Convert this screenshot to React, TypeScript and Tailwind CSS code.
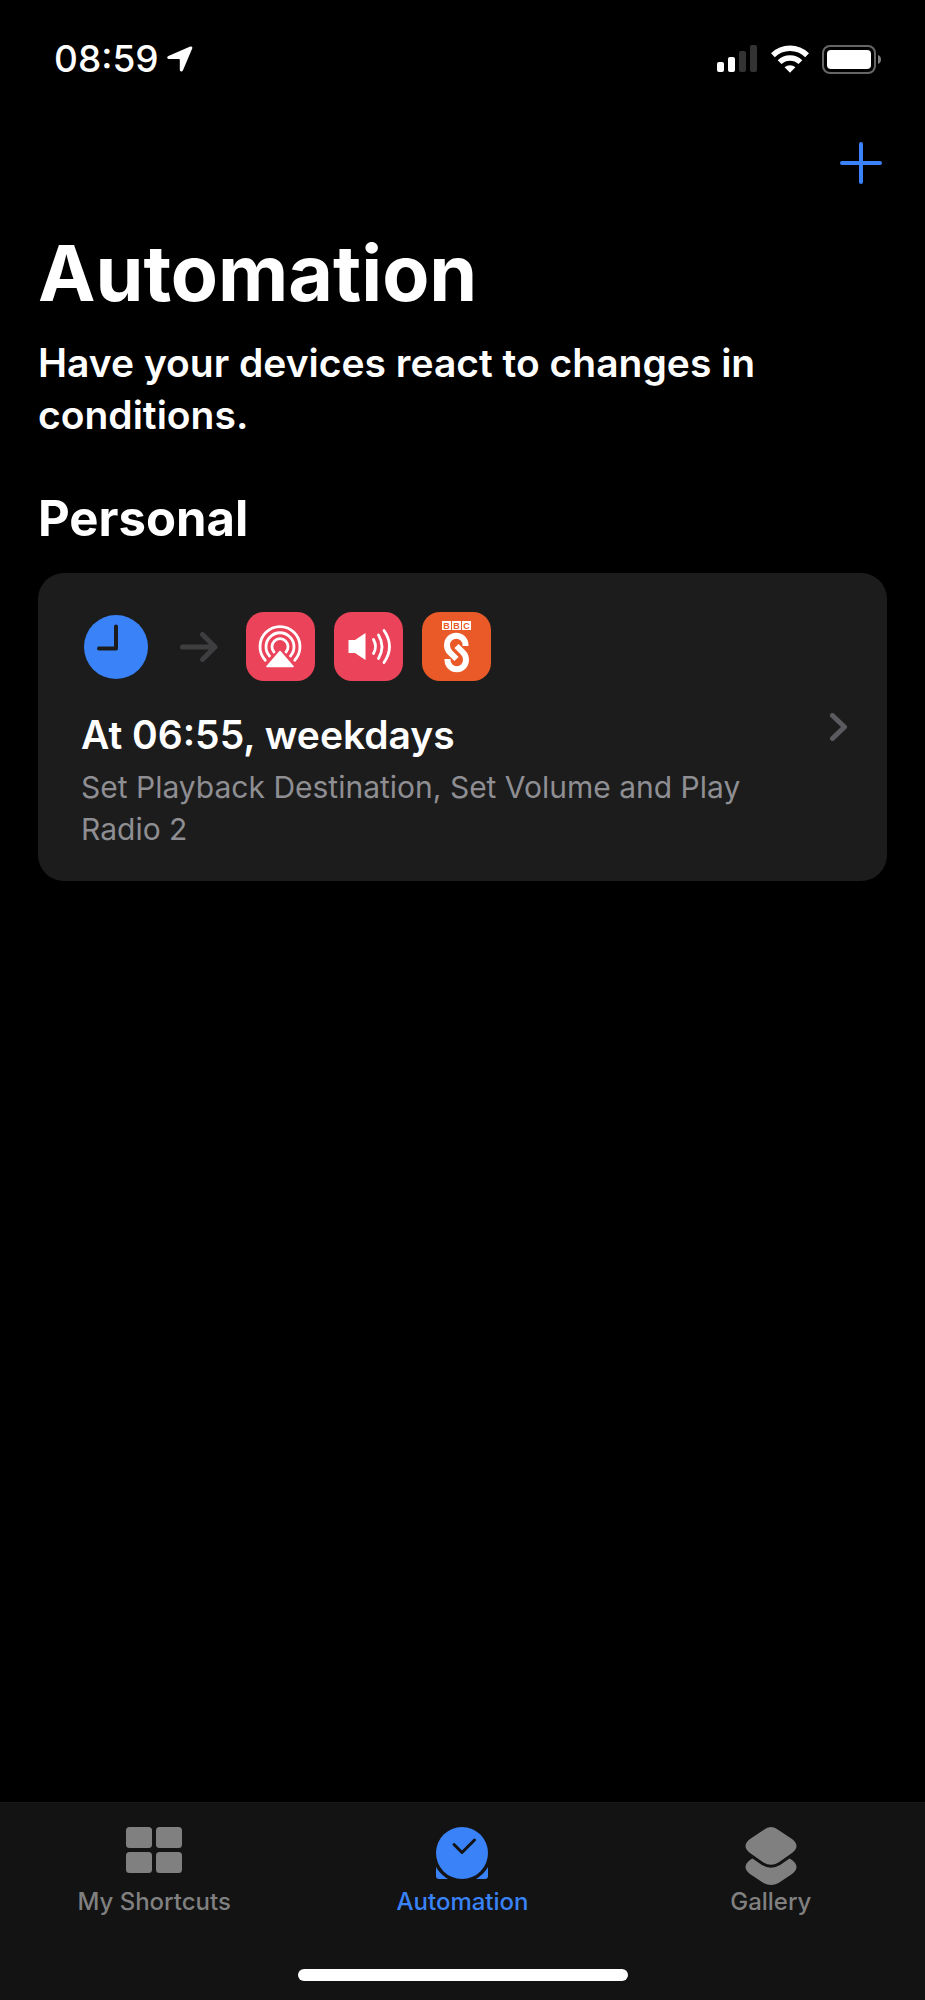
import type { ReactNode } from "react";

type Tab = {
  label: string;
  icon: ReactNode;
  active?: boolean;
};

function LocationIcon() {
  return (
    <svg width="26" height="26" viewBox="0 0 26 26" fill="currentColor" aria-hidden="true">
      <path d="M23.2.6 1.4 9.9C-.5 10.8 0 13 1.8 13H12c.5 0 .8.3.8.8v10c0 1.9 2.4 2.2 3.2.4l9.2-21.6c.6-1.4-.6-2.6-2-2z" />
    </svg>
  );
}

function SignalIcon() {
  return (
    <svg width="41" height="28" viewBox="0 0 41 28" fill="currentColor" aria-hidden="true">
      <rect x="0" y="17" width="7" height="10" rx="2" />
      <rect x="11" y="12" width="7" height="15" rx="2" />
      <rect x="22" y="6" width="7" height="21" rx="2" fill="#333" />
      <rect x="33" y="0" width="7" height="27" rx="2" fill="#333" />
    </svg>
  );
}

function WifiIcon() {
  return (
    <svg width="38" height="28" viewBox="0 0 38 28" fill="none" stroke="currentColor" strokeWidth="5.4" aria-hidden="true">
      <path d="M1.9 10.2a24.5 24.5 0 0 1 34.2 0" />
      <path d="M8.6 17.2a14.8 14.8 0 0 1 20.8 0" />
      <path d="M13.6 22.3a7.8 7.8 0 0 1 10.8 0L19 27.8z" fill="currentColor" stroke="none" />
    </svg>
  );
}

function BatteryIcon() {
  return (
    <svg width="60" height="29" viewBox="0 0 60 29" aria-hidden="true">
      <rect x="1" y="1" width="52" height="27" rx="7" fill="none" stroke="#666" strokeWidth="2" />
      <rect x="5" y="5" width="44" height="19" rx="4" fill="#fff" />
      <path d="M56 10c4 1.5 4 7.5 0 9z" fill="#808080" />
    </svg>
  );
}

function ClockIcon() {
  return (
    <svg width="64" height="64" viewBox="0 0 64 64" aria-hidden="true">
      <circle cx="32" cy="32" r="32" fill="#3a82f7" />
      <path d="M32 11.5V33.5H15" fill="none" stroke="#1c1c1c" strokeWidth="4" strokeLinecap="round" strokeLinejoin="round" />
    </svg>
  );
}

function ArrowIcon() {
  return (
    <svg width="38" height="30" viewBox="0 0 38 30" fill="none" stroke="#3e3e40" strokeWidth="5" strokeLinecap="round" strokeLinejoin="round" aria-hidden="true">
      <path d="M2.5 15H34M22.5 2.5 35 15 22.5 27.5" />
    </svg>
  );
}

function AirPlayIcon() {
  return (
    <svg width="69" height="69" viewBox="0 0 69 69" fill="none" stroke="#fff" strokeWidth="2.8" strokeLinecap="round" aria-hidden="true">
      <path d="M19.3 48.2A20 20 0 1 1 48.7 48.2" />
      <path d="M23.5 44A14 14 0 1 1 44.5 44" />
      <path d="M28 40A8 8 0 1 1 40 40" />
      <path d="M34 39.5 47 54.5H21z" fill="#fff" strokeWidth="1.6" strokeLinejoin="round" />
    </svg>
  );
}

function VolumeIcon() {
  return (
    <svg width="69" height="69" viewBox="0 0 69 69" fill="none" stroke="#fff" strokeWidth="2.8" strokeLinecap="round" aria-hidden="true">
      <path d="M14.5 28H21L31.5 21V48L21 41H14.5z" fill="#fff" stroke="none" />
      <path d="M39.5 27.5Q43.5 34.5 39.5 41.5" />
      <path d="M44.5 23Q51.5 34.5 44.5 46.5" />
      <path d="M50 18.5Q61 34.5 50 50.5" />
    </svg>
  );
}

function SoundsIcon() {
  return (
    <svg width="69" height="69" viewBox="0 0 69 69" aria-hidden="true">
      <g fill="#fff">
        <rect x="20" y="9" width="9" height="9" />
        <rect x="30" y="9" width="9" height="9" />
        <rect x="40" y="9" width="9" height="9" />
      </g>
      <g fill="#ea5a28" fontSize="9" fontWeight="700" textAnchor="middle" fontFamily="Liberation Sans, sans-serif">
        <text x="24.5" y="17">B</text>
        <text x="34.5" y="17">B</text>
        <text x="44.5" y="17">C</text>
      </g>
      <g fill="none" stroke="#fff" strokeWidth="6">
        <path d="M43.5 34V33A9 9 0 0 0 25 33Q25 37.5 28 40.5L34.5 47" />
        <path d="M25.5 47V48A9 9 0 0 0 44 48Q44 43.5 41 40.5L34.5 34" />
      </g>
    </svg>
  );
}

function ShortcutsTabIcon() {
  return (
    <svg width="56" height="60" viewBox="0 0 56 60" fill="currentColor" aria-hidden="true">
      <rect x="0" y="0" width="26" height="21" rx="3.5" />
      <rect x="30" y="0" width="26" height="21" rx="3.5" />
      <rect x="0" y="25" width="26" height="21" rx="3.5" />
      <rect x="30" y="25" width="26" height="21" rx="3.5" />
    </svg>
  );
}

function AutomationTabIcon() {
  return (
    <svg width="52" height="60" viewBox="0 0 52 60" aria-hidden="true">
      <path d="M0 38V49Q0 52 3 52H49Q52 52 52 49V38z" fill="currentColor" />
      <circle cx="26" cy="26" r="27" fill="none" stroke="#131313" strokeWidth="5" />
      <circle cx="26" cy="26" r="26" fill="currentColor" />
      <path d="M18 17.5 26 25.5 38.5 13" fill="none" stroke="#131313" strokeWidth="3" strokeLinecap="round" strokeLinejoin="round" />
    </svg>
  );
}

function GalleryTabIcon() {
  return (
    <svg width="52" height="60" viewBox="0 0 52 60" fill="currentColor" aria-hidden="true">
      <path d="M18.5 24Q26 18 33.5 24L47 33Q56 40 47 47L33.5 56Q26 60 18.5 56L5 47Q-4 40 5 33z" />
      <path
        d="M18.5 3Q26-3 33.5 3L47 12Q56 19 47 26L33.5 35.5Q26 40 18.5 35.5L5 26Q-4 19 5 12z"
        stroke="#131313"
        strokeWidth="6"
        paintOrder="stroke"
      />
    </svg>
  );
}

const actions = [
  { name: "Set Playback Destination", color: "bg-[#eb445a]", icon: <AirPlayIcon /> },
  { name: "Set Volume", color: "bg-[#eb445a]", icon: <VolumeIcon /> },
  { name: "Play Radio 2", color: "bg-[#ea5a28]", icon: <SoundsIcon /> },
];

const tabs: Tab[] = [
  { label: "My Shortcuts", icon: <ShortcutsTabIcon /> },
  { label: "Automation", icon: <AutomationTabIcon />, active: true },
  { label: "Gallery", icon: <GalleryTabIcon /> },
];

function StatusBar() {
  return (
    <div className="flex items-center justify-between pl-[54px] pr-[43px] pt-9">
      <div className="flex items-center gap-2">
        <span className="text-[37px] leading-[46px] font-medium">08:59</span>
        <LocationIcon />
      </div>
      <div className="flex items-center gap-[13px]">
        <SignalIcon />
        <WifiIcon />
        <BatteryIcon />
      </div>
    </div>
  );
}

function AutomationCard() {
  return (
    <button
      type="button"
      className="flex w-full items-center rounded-[26px] bg-[#1c1c1c] pl-[43px] pr-[39px] text-left"
    >
      <span className="flex-1 pt-[39px] pb-[31px]">
        <span className="flex items-center">
          <span className="px-[3px]">
            <ClockIcon />
          </span>
          <span className="ml-[29px] mr-7">
            <ArrowIcon />
          </span>
          <span className="flex gap-[19px]">
            {actions.map((action) => (
              <span key={action.name} className={`overflow-hidden rounded-[18px] ${action.color}`}>
                {action.icon}
              </span>
            ))}
          </span>
        </span>
        <span className="mt-[31px] block text-[39px] leading-[46px] font-semibold">
          At 06:55, weekdays
        </span>
        <span className="mt-2 block max-w-[690px] text-[30px] leading-[42px] text-[#8e8e93]">
          Set Playback Destination, Set Volume and Play Radio 2
        </span>
      </span>
      <svg width="18" height="28" viewBox="0 0 18 28" fill="none" stroke="#5b5b5f" strokeWidth="5" strokeLinecap="round" strokeLinejoin="round" aria-hidden="true">
        <path d="M2.5 2.5 14.5 14 2.5 25.5" />
      </svg>
    </button>
  );
}

export default function App() {
  return (
    <div className="flex min-h-screen flex-col bg-black font-['Inter',sans-serif] text-white">
      <StatusBar />

      <main className="flex-1 px-[38px]">
        <div className="flex justify-end pt-[60px] pr-[5px]">
          <button type="button" aria-label="Create automation" className="text-[#3a82f7]">
            <svg width="42" height="42" viewBox="0 0 42 42" fill="none" stroke="currentColor" strokeWidth="4" strokeLinecap="round">
              <path d="M21 2V40M2 21H40" />
            </svg>
          </button>
        </div>

        <h1 className="mt-[43px] text-[77px] leading-[92px] font-bold">Automation</h1>
        <p className="mt-[18px] max-w-[780px] text-[39px] leading-[52px] font-semibold">
          Have your devices react to changes in conditions.
        </p>

        <h2 className="mt-12 mb-6 text-[49px] leading-[60px] font-bold">Personal</h2>
        <AutomationCard />
      </main>

      <nav className="border-t border-[#1a1a1a] bg-[#131313] pt-6 pb-[19px]">
        <div className="grid grid-cols-3">
          {tabs.map((tab) => (
            <a
              key={tab.label}
              href="#"
              aria-current={tab.active ? "page" : undefined}
              className={`flex flex-col items-center text-[24px] leading-[30px] font-medium ${
                tab.active ? "text-[#3a82f7]" : "text-[#808080]"
              }`}
            >
              {tab.icon}
              {tab.label}
            </a>
          ))}
        </div>
        <div className="mx-auto mt-[52px] h-3 w-[330px] rounded-full bg-white" />
      </nav>
    </div>
  );
}
